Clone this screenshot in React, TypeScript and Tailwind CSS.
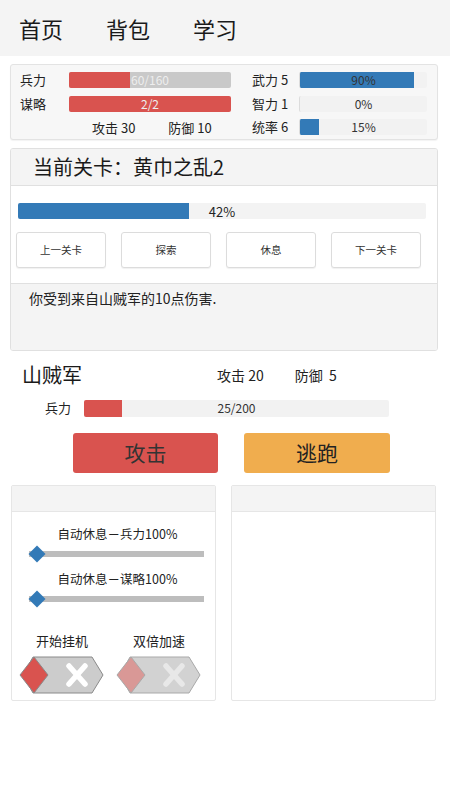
import React from 'react';

const FONT = { fontFamily: '"Noto Sans CJK SC", Roboto, "Noto Sans", sans-serif' };

function Bar({ pct, color, track, text, textColor, h = 16 }: { pct: number; color: string; track: string; text: string; textColor: string; h?: number }) {
  return (
    <div className={`relative w-full rounded-[2px] overflow-hidden ${track}`} style={{ height: h }}>
      <div className={`h-full ${color}`} style={{ width: `${pct}%` }} />
      <div className={`absolute inset-0 flex items-center justify-center text-[12px] leading-none ${textColor}`}>{text}</div>
    </div>
  );
}

function Toggle({ faded }: { faded?: boolean }) {
  const edge = faded ? '#a9a9a9' : '#8a8a8a';
  return (
    <svg width="86" height="38" viewBox="0 0 86 38">
      <polygon points="14,1 73,1 84,19 73,37 14,37 4,19" fill={faded ? '#d2d2d2' : '#cccccc'} stroke={edge} strokeWidth="1" />
      <line x1="50" y1="10" x2="66" y2="28" stroke={faded ? '#e8e8e8' : '#ffffff'} strokeWidth="5.5" strokeLinecap="round" />
      <line x1="66" y1="10" x2="50" y2="28" stroke={faded ? '#e8e8e8' : '#ffffff'} strokeWidth="5.5" strokeLinecap="round" />
      <polygon points="1,19 15,1 29,19 15,37" fill={faded ? '#d99896' : '#d9534f'} stroke={edge} strokeWidth="1" />
    </svg>
  );
}

function Slider({ label }: { label: string }) {
  return (
    <div className="flex flex-col">
      <div className="text-[12.5px] text-[#222] text-center pl-[8px] leading-[18px]">{label}</div>
      <div className="relative mt-[5px] ml-[17px] mr-[11px] h-[12px] flex items-center">
        <div className="w-full h-[6px] bg-[#bdbdbd]" />
        <div className="absolute left-[2px] top-0 w-[12px] h-[12px] bg-[#337ab7] rotate-45" />
      </div>
    </div>
  );
}

export default function App() {
  const stats = [
    { label: '武力 5', pct: 90, text: '90%' },
    { label: '智力 1', pct: 0, text: '0%' },
    { label: '统率 6', pct: 15, text: '15%' },
  ];
  return (
    <div className="w-[450px] h-[800px] bg-white text-[#222]" style={FONT}>
      {/* nav */}
      <div className="h-[56px] bg-[#f4f4f4] flex items-center pl-[19px] gap-[43px] text-[22px] text-[#1a1a1a]">
        <span>首页</span>
        <span>背包</span>
        <span>学习</span>
      </div>

      {/* player card */}
      <div className="ml-[10px] w-[428px] mt-[8px] h-[76px] bg-[#f7f7f7] border border-[#e3e3e3] rounded-[3px] shadow-[0_1px_1px_rgba(0,0,0,0.05)] flex pt-[3px]">
        <div className="w-[230px] flex flex-col">
          <div className="h-[25px] flex items-center">
            <span className="w-[58px] pl-[9px] text-[13px]">兵力</span>
            <div className="w-[162px]"><Bar pct={37.5} color="bg-[#d9534f]" track="bg-[#c9c9c9]" text="60/160" textColor="text-[#eeeeee]" /></div>
          </div>
          <div className="h-[25px] flex items-center">
            <span className="w-[58px] pl-[9px] text-[13px]">谋略</span>
            <div className="w-[162px]"><Bar pct={100} color="bg-[#d9534f]" track="bg-[#c9c9c9]" text="2/2" textColor="text-[#eeeeee]" /></div>
          </div>
          <div className="h-[24px] flex items-center text-[13px]">
            <span className="ml-[81px]">攻击 30</span>
            <span className="ml-[33px]">防御 10</span>
          </div>
        </div>
        <div className="flex-1 flex flex-col">
          {stats.map((s) => (
            <div key={s.label} className="h-[25px] flex items-center">
              <span className="w-[58px] pl-[11px] text-[13px] whitespace-nowrap">{s.label}</span>
              <div className="w-[128px]"><Bar pct={s.pct} color="bg-[#337ab7]" track="bg-[#f2f2f2] border-l border-[#dcdcdc]" text={s.text} textColor="text-[#333]" /></div>
            </div>
          ))}
        </div>
      </div>

      {/* stage card */}
      <div className="ml-[10px] w-[428px] mt-[8px] h-[203px] border border-[#e0e0e0] rounded-[3px] flex flex-col overflow-hidden">
        <div className="h-[37px] bg-[#f4f4f4] border-b border-[#e0e0e0] flex items-center pl-[22px] text-[20px] text-[#1a1a1a]">
          当前关卡：黄巾之乱2
        </div>
        <div className="bg-white pl-[7px] pr-[11px] pt-[17px] h-[98px] border-b border-[#e0e0e0]">
          <Bar pct={42} color="bg-[#337ab7]" track="bg-[#f3f3f3]" text="42%" textColor="text-[#222] text-[13px]" />
          <div className="flex gap-[15px] mt-[13px] -ml-[2px]">
            {['上一关卡', '探索', '休息', '下一关卡'].map((t) => (
              <div key={t} className="w-[90px] h-[36px] border border-[#dcdcdc] rounded-[3px] bg-white shadow-[0_1px_1px_rgba(0,0,0,0.06)] flex items-center justify-center text-[10.5px] text-[#333]">{t}</div>
            ))}
          </div>
        </div>
        <div className="flex-1 bg-[#f4f4f4] pl-[18px] pt-[4px] text-[14px] text-[#222]">你受到来自山贼军的10点伤害.</div>
      </div>

      {/* enemy */}
      <div className="mt-[11px] h-[26px] flex items-center">
        <span className="ml-[22px] text-[20px] text-[#1a1a1a] w-[195px]">山贼军</span>
        <span className="text-[14px]">攻击 20</span>
        <span className="ml-[31px] text-[14px] whitespace-pre">防御  5</span>
      </div>
      <div className="mt-[11px] h-[18px] flex items-center">
        <span className="ml-[45px] w-[39px] text-[13px]">兵力</span>
        <div className="w-[305px]"><Bar pct={12.5} color="bg-[#d9534f]" track="bg-[#f2f2f2]" text="25/200" textColor="text-[#333]" h={17} /></div>
      </div>

      {/* actions */}
      <div className="mt-[16px] flex pl-[73px] gap-[26px]">
        <div className="w-[145px] h-[40px] rounded-[3px] bg-[#d9534f] flex items-center justify-center text-[21px] text-[#333]">攻击</div>
        <div className="w-[146px] h-[40px] rounded-[3px] bg-[#f0ad4e] flex items-center justify-center text-[21px] text-[#222]">逃跑</div>
      </div>

      {/* bottom panels */}
      <div className="mt-[12px] flex pl-[11px] gap-[15px]">
        <div className="w-[205px] h-[216px] border border-[#e6e6e6] rounded-[2px] flex flex-col">
          <div className="h-[26px] bg-[#f4f4f4] border-b border-[#e6e6e6]" />
          <div className="pt-[13px] flex flex-col gap-[10px]">
            <Slider label="自动休息－兵力100%" />
            <Slider label="自动休息－谋略100%" />
          </div>
          <div className="mt-[27px] flex pl-[7px] gap-[11px]">
            <div className="flex flex-col items-center w-[86px]">
              <span className="text-[13px] text-[#222] leading-[18px]">开始挂机</span>
              <div className="mt-[6px]"><Toggle /></div>
            </div>
            <div className="flex flex-col items-center w-[86px]">
              <span className="text-[13px] text-[#222] leading-[18px]">双倍加速</span>
              <div className="mt-[6px]"><Toggle faded /></div>
            </div>
          </div>
        </div>
        <div className="w-[205px] h-[216px] border border-[#e6e6e6] rounded-[2px] flex flex-col">
          <div className="h-[26px] bg-[#f4f4f4] border-b border-[#e6e6e6]" />
        </div>
      </div>
    </div>
  );
}
